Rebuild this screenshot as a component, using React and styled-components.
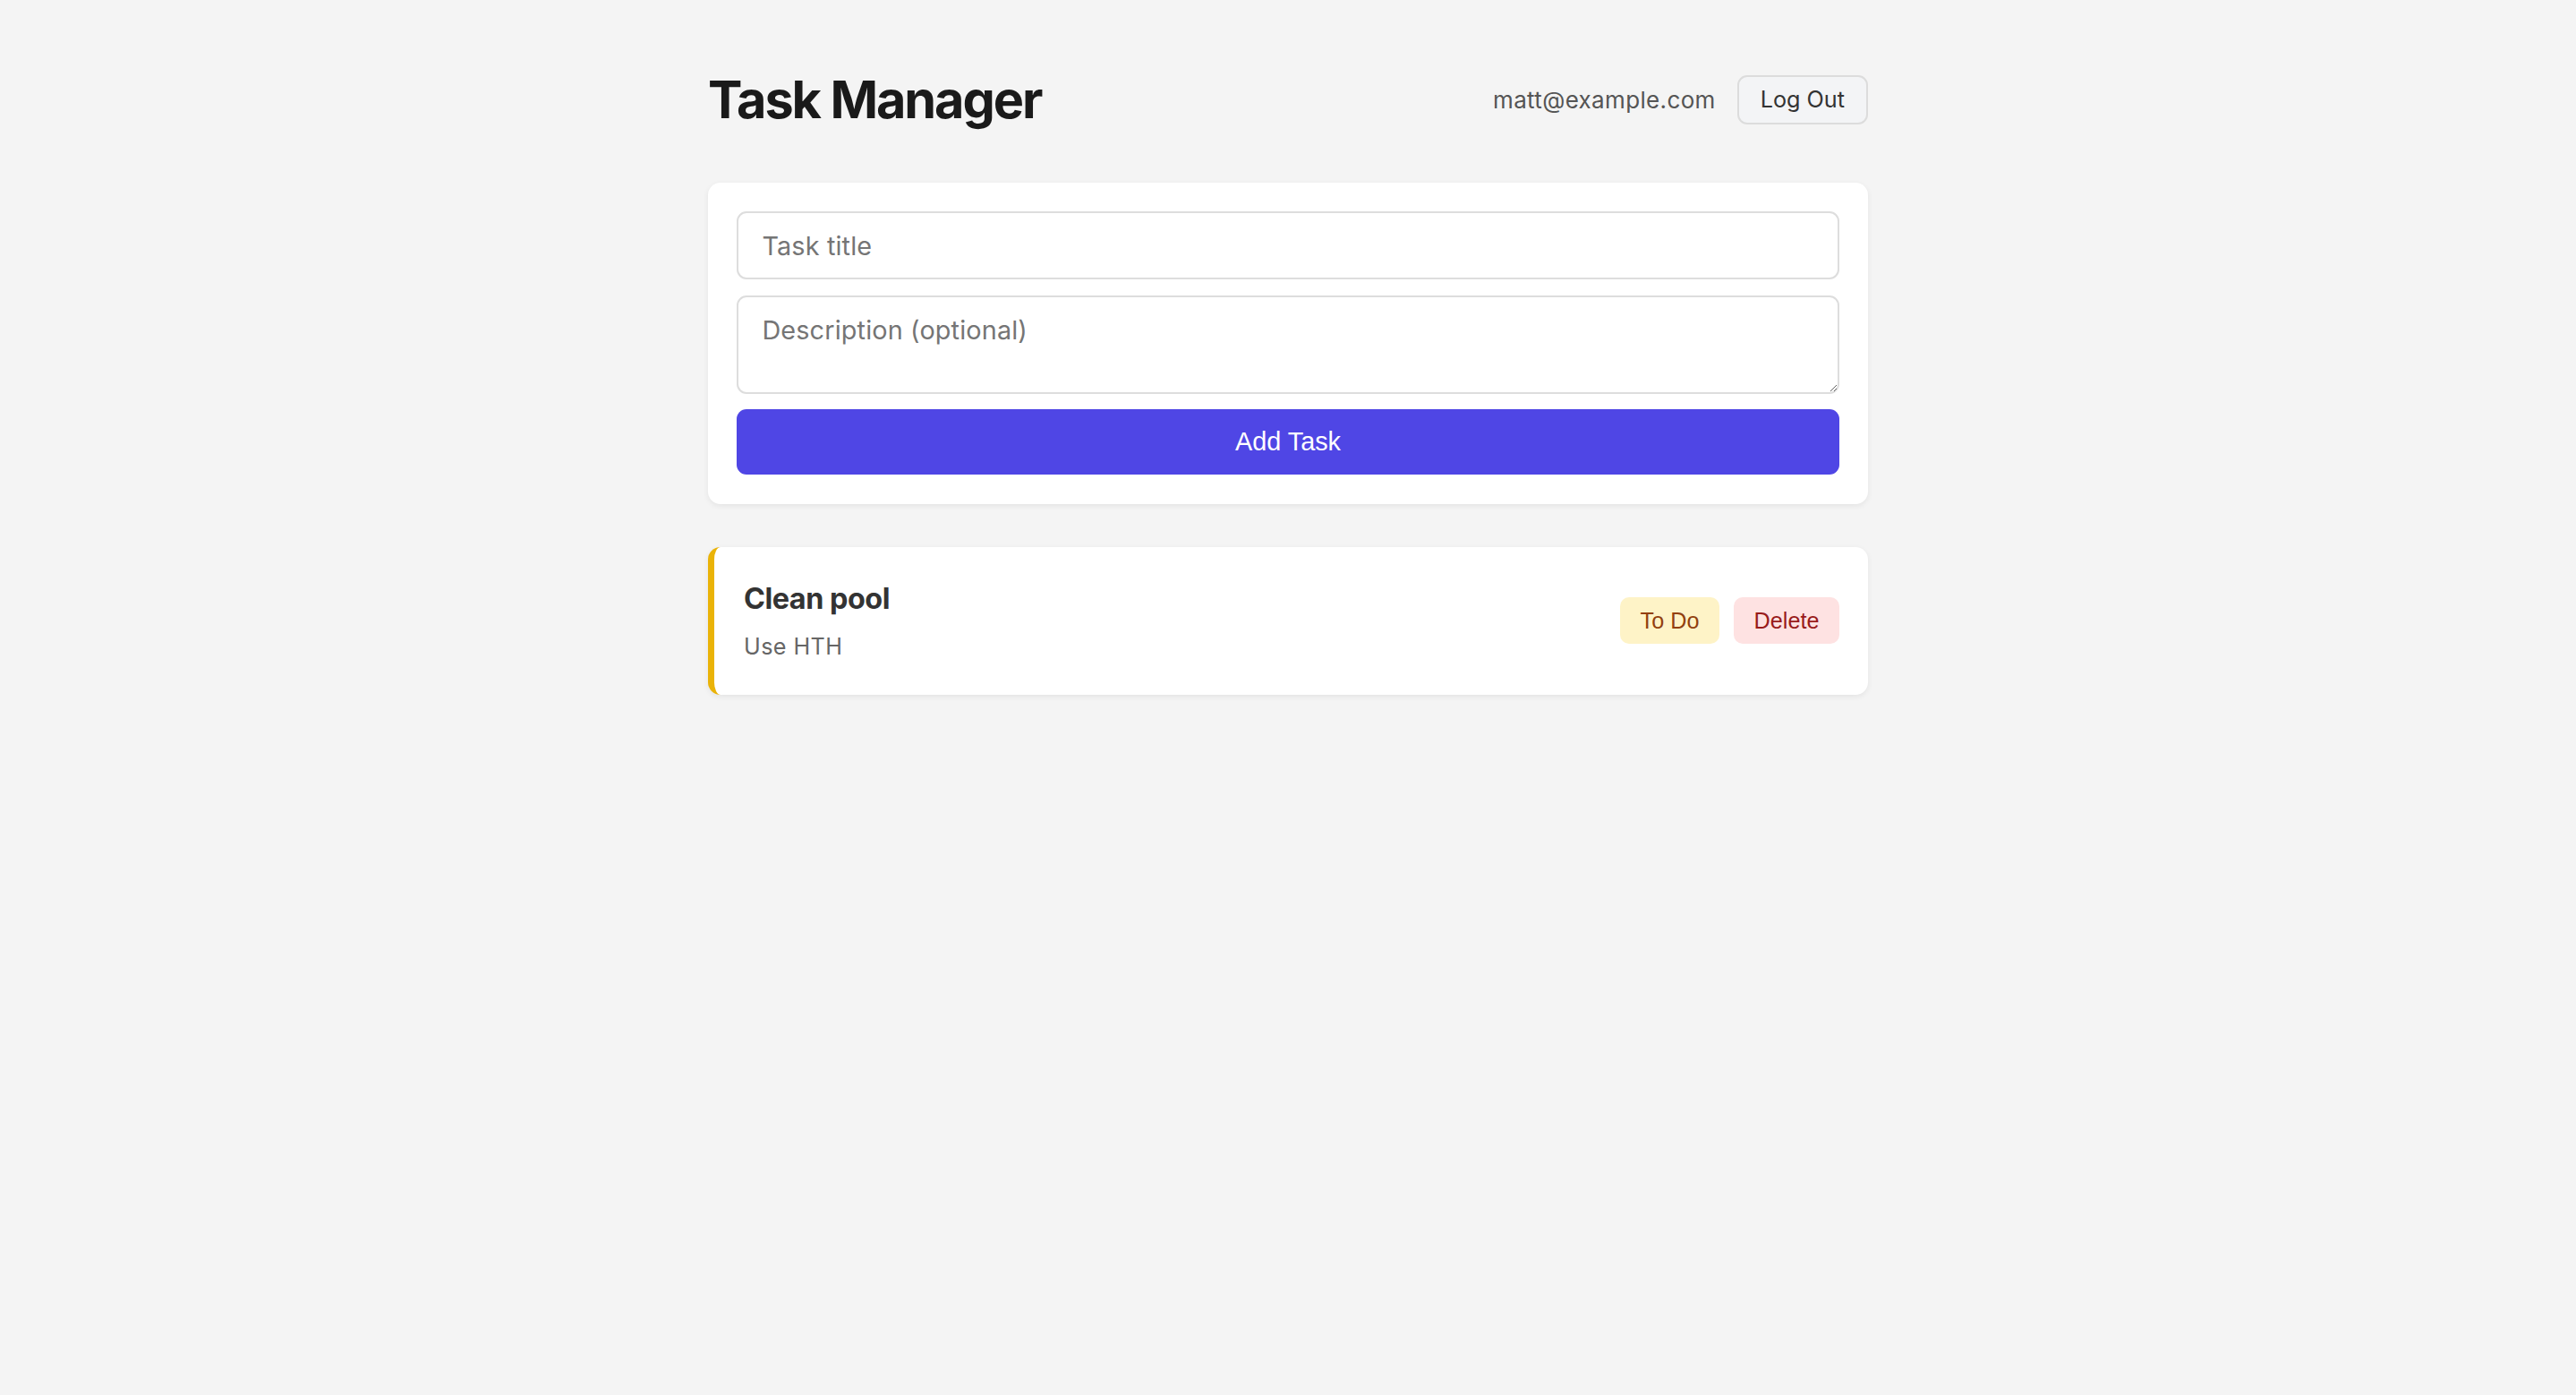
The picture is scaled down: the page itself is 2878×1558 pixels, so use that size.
import { useState } from "react";
import styled, { createGlobalStyle } from "styled-components";

const GlobalStyle = createGlobalStyle`
  html, body {
    margin: 0;
    padding: 0;
    background: #f4f4f4;
    font-family: Inter, "Noto Sans", sans-serif;
  }
  * {
    box-sizing: border-box;
  }
`;

const Page = styled.div`
  min-height: 100vh;
  padding-top: 76px;
`;

const Container = styled.main`
  width: 1296px;
  margin: 0 auto;
`;

const Header = styled.header`
  display: flex;
  justify-content: space-between;
  align-items: center;
  height: 70px;
  margin-bottom: 58px;
`;

const Title = styled.h1`
  margin: 0;
  font-size: 57.6px;
  line-height: 70px;
  font-weight: 700;
  color: #1a1a1a;
  letter-spacing: -2.1px;
`;

const UserBox = styled.div`
  display: flex;
  align-items: center;
  gap: 24px;
`;

const Email = styled.span`
  font-size: 26px;
  letter-spacing: 0.35px;
  color: #555;
`;

const LogOutButton = styled.button`
  height: 55px;
  padding: 0 24px;
  border: 2px solid #dcdcdc;
  border-radius: 11px;
  background: #f3f4f6;
  color: #333;
  font-family: Inter, "Noto Sans", sans-serif;
  font-size: 25.2px;
  cursor: pointer;
`;

const Card = styled.section`
  background: #fff;
  border-radius: 14px;
  box-shadow: 0 2px 6px rgba(0, 0, 0, 0.07);
`;

const Form = styled(Card).attrs({ as: "form" })`
  display: flex;
  flex-direction: column;
  gap: 18px;
  padding: 32.4px;
`;

const fieldStyle = `
  width: 100%;
  border: 2px solid #dddddd;
  border-radius: 11px;
  background: #fff;
  font-family: Inter, "Noto Sans", sans-serif;
  font-size: 28.8px;
  letter-spacing: 0.15px;
  color: #222;
  outline: none;
  &::placeholder {
    color: #757575;
  }
`;

const TextInput = styled.input`
  ${fieldStyle}
  height: 76px;
  padding: 0 26px;
`;

const TextArea = styled.textarea`
  ${fieldStyle}
  height: 110px;
  padding: 19px 26px 14px;
  resize: vertical;
  line-height: 1.25;
`;

const SubmitButton = styled.button`
  height: 73px;
  margin-top: -1px;
  border: none;
  border-radius: 11px;
  background: #4f46e5;
  color: #fff;
  font-family: "Liberation Sans", Arial, sans-serif;
  font-size: 28.8px;
  cursor: pointer;
`;

const TaskList = styled.div`
  display: flex;
  flex-direction: column;
  gap: 20px;
  margin-top: 48px;
`;

const TaskCard = styled(Card)`
  display: flex;
  justify-content: space-between;
  align-items: center;
  min-height: 165px;
  padding: 0 32px 0 33px;
  border-left: 7.2px solid ${({ $accent }) => $accent};
`;

const TaskInfo = styled.div`
  display: flex;
  flex-direction: column;
  gap: 19px;
`;

const TaskTitle = styled.h3`
  margin: 0;
  font-size: 32.4px;
  line-height: 39px;
  font-weight: 700;
  letter-spacing: -0.5px;
  color: #333;
`;

const TaskDesc = styled.p`
  margin: 0;
  font-size: 25.2px;
  line-height: 31px;
  letter-spacing: 0.4px;
  color: #666;
`;

const Actions = styled.div`
  display: flex;
  align-items: center;
  gap: 16px;
`;

const Pill = styled.button`
  height: 52px;
  padding: 0 22.6px;
  border: none;
  border-radius: 10px;
  background: ${({ $bg }) => $bg};
  color: ${({ $fg }) => $fg};
  font-family: "Liberation Sans", Arial, sans-serif;
  font-size: 25.2px;
  cursor: pointer;
`;

const STATUS = {
  todo: { label: "To Do", bg: "#fef3c7", fg: "#92400e", accent: "#eab308" },
};

export default function App() {
  const [title, setTitle] = useState("");
  const [desc, setDesc] = useState("");
  const [tasks] = useState([
    { id: 1, title: "Clean pool", description: "Use HTH", status: "todo" },
  ]);

  return (
    <Page>
      <GlobalStyle />
      <Container>
        <Header>
          <Title>Task Manager</Title>
          <UserBox>
            <Email>matt@example.com</Email>
            <LogOutButton>Log Out</LogOutButton>
          </UserBox>
        </Header>

        <Form onSubmit={(e) => e.preventDefault()}>
          <TextInput
            placeholder="Task title"
            value={title}
            onChange={(e) => setTitle(e.target.value)}
          />
          <TextArea
            placeholder="Description (optional)"
            value={desc}
            onChange={(e) => setDesc(e.target.value)}
          />
          <SubmitButton type="submit">Add Task</SubmitButton>
        </Form>

        <TaskList>
          {tasks.map((task) => {
            const s = STATUS[task.status];
            return (
              <TaskCard key={task.id} $accent={s.accent}>
                <TaskInfo>
                  <TaskTitle>{task.title}</TaskTitle>
                  <TaskDesc>{task.description}</TaskDesc>
                </TaskInfo>
                <Actions>
                  <Pill $bg={s.bg} $fg={s.fg}>{s.label}</Pill>
                  <Pill $bg="#fee2e2" $fg="#991b1b">Delete</Pill>
                </Actions>
              </TaskCard>
            );
          })}
        </TaskList>
      </Container>
    </Page>
  );
}
